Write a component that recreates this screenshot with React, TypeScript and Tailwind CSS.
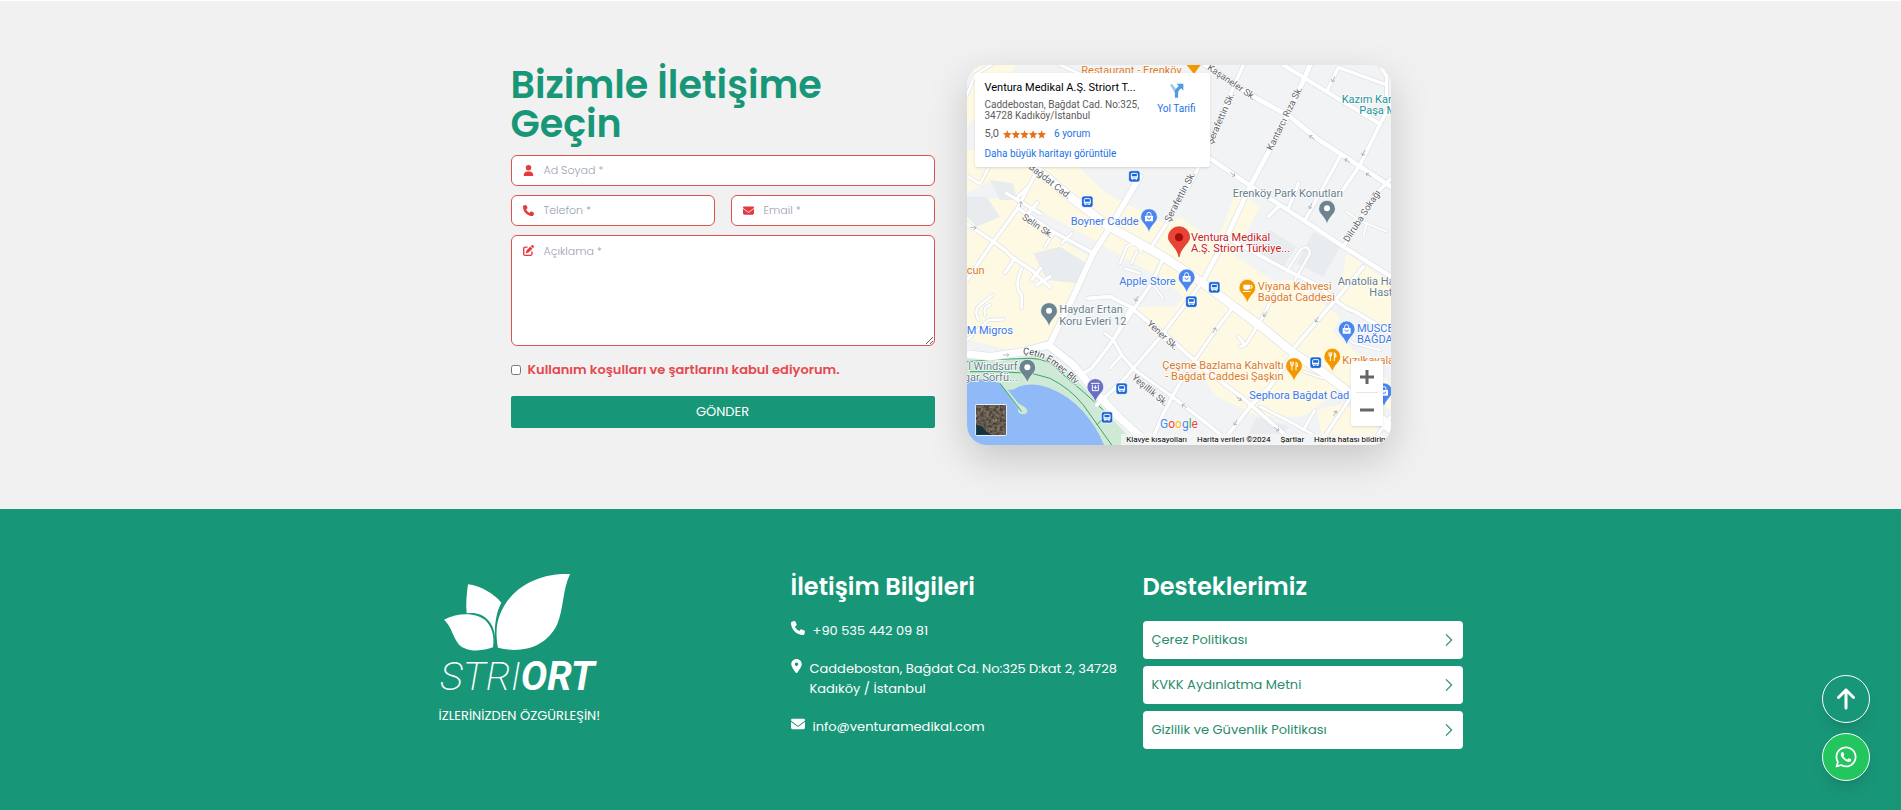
import type { ReactNode } from 'react';
import { BsChevronRight } from 'react-icons/bs';
import {
  FaArrowUp,
  FaEnvelope,
  FaLocationDot,
  FaPenToSquare,
  FaPhone,
  FaUser,
  FaWhatsapp,
} from 'react-icons/fa6';

const BODY_FONT = "font-['Poppins','Inter','Open_Sans',sans-serif]";
const MAP_FONT = "font-['Roboto','Noto_Sans',sans-serif]";

const POLICIES = ['Çerez Politikası', 'KVKK Aydınlatma Metni', 'Gizlilik ve Güvenlik Politikası'];

// [path, stroke width]
const ROADS: [string, number][] = [
  ['M51 135 L75 75 L130 40', 8],
  ['M51 378 L90 402 L120 345', 8],
  ['M51 522 L130 575 L200 480 L270 345', 10],
  ['M51 690 L130 575 L165 600', 10],
  ['M165 600 L190 625 L245 660 L300 712 M165 668 L195 625 M245 690 L272 655 M260 705 L300 680', 10],
  ['M215 655 Q190 710 215 735 L215 775', 8],
  ['M170 430 L270 490 M205 440 L235 410 M235 490 L262 458', 10],
  ['M205 475 L310 545 L430 610', 10],
  ['M285 590 L310 550 M335 580 L365 550', 8],
  ['M51 870 L115 810 L160 808', 8],
  ['M85 810 Q70 780 90 765 L128 735 M105 795 Q98 770 120 765', 7],
  ['M330 45 L420 85', 9],
  ['M880 45 L780 270 L735 375 L650 520 L605 590', 10],
  ['M640 625 L605 700 L550 780 L475 890 L425 955 L390 975', 10],
  ['M605 700 L640 745', 6],
  ['M1080 45 L1020 185 L905 400 L830 560 L755 700', 14],
  ['M750 705 L640 850 L520 990 L440 1065', 10],
  ['M850 770 L790 850 L700 980 L640 1090 L600 1185', 10],
  ['M760 40 L920 145 L1020 200 L1100 265 L1200 330 L1323 410', 14],
  ['M1000 45 L1130 125 L1290 222', 12],
  ['M1130 125 L1165 52 L1310 105 M1290 45 L1310 80 L1310 140 L1323 165', 10],
  ['M1323 160 L1290 222 L1230 345 L1175 425', 11],
  ['M780 325 L905 410 L990 465 L1090 530 L1180 590 L1323 680', 13],
  ['M1170 320 L1065 510 M1045 400 L1015 475 M955 500 L990 465', 10],
  ['M1323 385 L1270 440 L1180 590', 10],
  ['M1190 485 L1225 510 L1310 545 M1250 520 L1240 560', 6],
  ['M825 560 L1010 660 L1100 705 L1155 750 L1190 775 L1215 785 L1323 850', 11],
  ['M1010 665 L1050 600 Q1075 580 1080 610 L1035 690', 7],
  ['M1240 650 L1165 740 L1035 890', 11],
  ['M970 730 L945 790 L890 880 M865 860 L885 885 L870 890', 9],
  ['M415 745 L480 740 L540 770 L600 820 L660 865 L760 955 L880 1045 L1040 1185', 11],
  ['M545 770 L490 870 L515 915 L555 960 L680 1050 L770 1120 L850 1185', 10],
  ['M490 870 L465 850 M515 915 L480 955', 8],
  ['M1030 910 L960 1010 L900 1070 L830 1160', 11],
  ['M1125 970 L1220 1050 L1323 1150 M1200 1045 L1130 1150 L1100 1185', 10],
  ['M930 1070 L1010 1110 L1100 1160 M1060 1140 L1095 1080 M1323 1100 L1270 1170', 8],
  ['M1060 965 L1120 985 M1190 860 L1210 880 L1290 900', 6],
  ['M510 640 L530 590 Q560 570 575 605 M525 655 L570 670 M545 640 L560 605', 7],
  ['M570 380 L475 540 L430 610 L370 740 L295 890', 17],
  ['M200 310 L245 345 L360 440 L470 525 L640 620 L760 700 L850 768 L940 835 L1030 908 L1120 968 L1200 1030 L1323 1130', 25],
  ['M51 912 L120 920 L220 905 L295 885 L370 945 L440 1030 L510 1105 L600 1185', 22],
];

const COMMERCIAL = [
  'M51 300 H330 L470 430 L640 520 L690 500 L860 620 L980 700 L1130 830 L1323 1000 V1080 L1160 1010 L1010 960 L860 1010 L720 910 L640 820 L700 740 L640 690 L430 570 L250 470 L130 390 L51 430 Z',
  'M51 450 L190 440 L330 570 L420 620 L360 740 L300 870 L180 900 L51 870 Z',
  'M860 420 L930 470 L850 620 L790 600 Z',
  'M780 700 L1030 690 L1170 800 L1120 900 L1060 900 L900 800 Z',
  'M1190 610 L1323 700 V850 L1160 760 Z',
  'M560 770 L720 770 L820 830 L740 940 L600 840 Z',
  'M730 940 L1040 930 L1170 1020 L1060 1100 L930 1100 L800 1040 Z',
  'M1100 1080 L1180 1060 L1290 1140 L1240 1185 H1120 Z',
  'M75 45 H200 L120 160 L51 230 V130 Z',
];

const BLOCKS = [
  'M51 440 L110 440 L150 500 L80 530 L51 500 Z',
  'M120 390 L190 400 L200 450 L150 450 Z',
  'M250 610 L330 590 L410 640 L380 700 L290 690 Z',
  'M1090 545 L1170 590 L1120 680 L1040 640 Z',
  'M880 590 L960 540 L1040 590 L1000 650 Z',
  'M920 1100 L1020 1130 L960 1185 H880 Z',
];

const ARROWS: [number, number, number][] = [
  [70, 533, 10], [212, 463, 280], [168, 915, 0], [848, 373, 35], [1086, 262, 215], [1192, 332, 215],
  [1256, 375, 215], [1150, 88, 115], [1241, 309, 115], [1082, 468, 115], [945, 792, 120], [1101, 809, 120],
  [793, 841, -60], [560, 746, 120], [703, 1068, 215], [867, 1046, 35], [980, 1137, 35], [857, 1118, 120],
  [1155, 1090, -60],
];

const BUS_STOPS = [[553, 379], [412, 455], [793, 712], [724, 755], [515, 1016], [471, 1102], [1097, 938]];

interface LabelProps {
  x: number;
  y: number;
  color: string;
  lines: string[];
  anchor?: 'start' | 'middle' | 'end';
}

const PLACES: LabelProps[] = [
  { x: 394, y: 71, color: '#dc7a1e', lines: ['Restaurant - Erenköy'] },
  { x: 1175, y: 158, color: '#1a929c', lines: ['Kazım Kar'] },
  { x: 1228, y: 192, color: '#1a929c', lines: ['Paşa M'] },
  { x: 848, y: 442, color: '#67808c', lines: ['Erenköy Park Konutları'] },
  { x: 566, y: 526, color: '#3b78e7', lines: ['Boyner Cadde'], anchor: 'end' },
  { x: 723, y: 573, color: '#c5221f', lines: ['Ventura Medikal', 'A.Ş. Striort Türkiye...'] },
  { x: 677, y: 706, color: '#3b78e7', lines: ['Apple Store'], anchor: 'end' },
  { x: 923, y: 720, color: '#dc7a1e', lines: ['Viyana Kahvesi', 'Bağdat Caddesi'] },
  { x: 1163, y: 704, color: '#67808c', lines: ['Anatolia Ha'] },
  { x: 1258, y: 738, color: '#67808c', lines: ['Hast'] },
  { x: 50, y: 673, color: '#dc7a1e', lines: ['cun'] },
  { x: 50, y: 851, color: '#3b78e7', lines: ['M Migros'] },
  { x: 328, y: 790, color: '#67808c', lines: ['Haydar Ertan', 'Koru Evleri 12'] },
  { x: 203, y: 960, color: '#67808c', lines: ['l Windsurf', 'gar Sörfü...'], anchor: 'end' },
  { x: 1221, y: 845, color: '#3b78e7', lines: ['MUSCE', 'BAĞDA'] },
  { x: 1001, y: 956, color: '#dc7a1e', lines: ['Çeşme Bazlama Kahvaltı', '- Bağdat Caddesi Şaşkın'], anchor: 'end' },
  { x: 1177, y: 942, color: '#dc7a1e', lines: ['Kızılkayala'] },
  { x: 898, y: 1047, color: '#3b78e7', lines: ['Sephora Bağdat Cad'] },
];

// [text, centre x, centre y, angle]
const STREETS: [string, number, number, number][] = [
  ['Bağdat Cad.', 300, 394, 38],
  ['Selin Sk.', 263, 528, 34],
  ['Kaşaneler Sk.', 845, 97, 34],
  ['Kantarcı Rıza Sk.', 1004, 205, -64],
  ['Şerafettin Sk.', 812, 205, -66],
  ['Şerafettin Sk.', 690, 440, -62],
  ['Dilruba Sokağı', 1236, 498, -57],
  ['Yener Sk.', 638, 856, 43],
  ['Yeşillik Sk.', 600, 1021, 40],
];

const Pin = ({ x, y, color, children }: { x: number; y: number; color: string; children?: ReactNode }) => (
  <g transform={`translate(${x} ${y})`}>
    <path
      d="M0 46 C-3 34 -8 28 -16 18 C-22 11 -25 6 -25 -1 A25 25 0 0 1 25 -1 C25 6 22 11 16 18 C8 28 3 34 0 46 Z"
      fill={color}
      stroke="#fff"
      strokeWidth="2"
    />
    {children ?? <circle cy="-2" r="9" fill="#fff" />}
  </g>
);

const BagGlyph = () => (
  <g>
    <rect x="-12" y="-5" width="24" height="17" rx="2" fill="#fff" />
    <path d="M-6 -5 V-9 A6 6 0 0 1 6 -9 V-5" fill="none" stroke="#fff" strokeWidth="3" />
    <path d="M-5 0 A5 5 0 0 0 5 0" fill="none" stroke="#4a86ee" strokeWidth="3" />
  </g>
);

const ForkGlyph = () => (
  <path
    d="M-10 -14 V-6 Q-10 -2 -6 -2 Q-2 -2 -2 -6 V-14 M-6 -14 V12 M6 12 V-13 Q11 -11 11 0 H6"
    fill="none"
    stroke="#fff"
    strokeWidth="3"
  />
);

const MapCanvas = () => (
  <svg
    viewBox="51 45 1272 1140"
    preserveAspectRatio="xMidYMid slice"
    className={`block h-full w-full ${MAP_FONT}`}
    role="img"
    aria-label="Harita"
  >
    <defs>
      <filter id="terrain" x="0" y="0" width="1" height="1" colorInterpolationFilters="sRGB">
        <feTurbulence type="fractalNoise" baseFrequency="0.12" numOctaves="3" seed="4" />
        <feColorMatrix values="0.5 0 0 0 0.14  0.46 0 0 0 0.12  0.4 0 0 0 0.1  0 0 0 0 1" />
      </filter>
      <path id="coast" d="M218 912 Q275 915 325 958 T392 1020" />
    </defs>
    <rect x="51" y="45" width="1272" height="1140" fill="#f1f3f4" />
    {COMMERCIAL.map(d => <path key={d} d={d} fill="#fef9e3" />)}
    {BLOCKS.map(d => <path key={d} d={d} fill="#e9ecef" />)}
    <path
      d="M51 925 L140 935 L240 918 L300 922 L350 960 L420 1030 L490 1110 L560 1185 H51 Z"
      fill="#ceead6"
    />
    <path
      d="M51 985 L120 990 L150 1000 L205 1075 Q200 1095 225 1092 Q240 1085 225 1072 L205 1060 L172 1018 Q185 1025 205 1010 Q250 995 300 1015 Q360 1040 400 1085 Q440 1130 462 1185 H51 Z"
      fill="#90b9f7"
    />
    <g fill="none" stroke="#3ca56a" strokeWidth="3">
      <path d="M51 935 L150 928 L240 925 Q300 925 335 970 Q370 1000 405 1030 L460 1080" />
      <path d="M60 965 H140 L245 970 L300 985 Q360 1015 400 1065 L485 1185 M440 1125 L460 1105 M150 1000 L215 1085" />
    </g>
    <g fill="none" strokeLinecap="round" strokeLinejoin="round">
      {ROADS.map(([d, w]) => <path key={d} d={d} stroke="#dde1e6" strokeWidth={w + 4} />)}
      {ROADS.map(([d, w]) => <path key={d} d={d} stroke="#fff" strokeWidth={w} />)}
      {ARROWS.map(([x, y, angle]) => (
        <path
          key={`${x}-${y}`}
          transform={`translate(${x} ${y}) rotate(${angle})`}
          d="M-8 0 H8 M3 -5 L8 0 L3 5"
          stroke="#9aa0a6"
          strokeWidth="2"
        />
      ))}
    </g>
    {BUS_STOPS.map(([x, y]) => (
      <g key={x} transform={`translate(${x} ${y})`}>
        <rect x="-17" y="-17" width="34" height="34" rx="7" fill="#1a66d6" stroke="#fff" strokeWidth="2" />
        <rect x="-9" y="-9" width="18" height="16" rx="2" fill="none" stroke="#fff" strokeWidth="3" />
        <path d="M-9 2 H9 M-6 6 V10 M6 6 V10" stroke="#fff" strokeWidth="4" />
      </g>
    ))}
    <g fontSize="28" textAnchor="middle" fill="#5f6368" stroke="#fff" strokeWidth="4" paintOrder="stroke">
      {STREETS.map(([name, x, y, angle]) => (
        <text key={`${name}-${x}`} transform={`translate(${x} ${y}) rotate(${angle})`} y="9">
          {name}
        </text>
      ))}
    </g>
    <text fontSize="28" fill="#4a4e52" stroke="#fff" strokeWidth="4" paintOrder="stroke">
      <textPath href="#coast">Çetin Emeç Blv.</textPath>
    </text>

    <path d="M710 45 H752 L732 72 Z" fill="#f29900" />
    <Pin x={597} y={502} color="#4a86ee"><BagGlyph /></Pin>
    <Pin x={710} y={683} color="#4a86ee"><BagGlyph /></Pin>
    <Pin x={1190} y={839} color="#4a86ee"><BagGlyph /></Pin>
    <Pin x={1302} y={1025} color="#4a86ee"><BagGlyph /></Pin>
    <Pin x={1131} y={477} color="#6b8490" />
    <Pin x={297} y={784} color="#6b8490" />
    <Pin x={232} y={954} color="#6b8490" />
    <Pin x={436} y={1012} color="#6a6fc4">
      <path d="M-13 -12 H13 M-9 -8 V10 H9 V-8 M0 -6 V6 M-5 0 H5" fill="none" stroke="#fff" strokeWidth="3" />
    </Pin>
    <Pin x={892} y={714} color="#f29900">
      <path d="M-12 -10 H8 V-1 Q8 5 2 5 H-6 Q-12 5 -12 -1 Z M-13 9 H10 V12 H-13 Z" fill="#fff" />
      <path d="M8 -7 H14 V0 H8" fill="none" stroke="#fff" strokeWidth="3" />
    </Pin>
    <Pin x={1032} y={949} color="#f29900"><ForkGlyph /></Pin>
    <Pin x={1147} y={921} color="#f29900"><ForkGlyph /></Pin>
    <path
      d="M687 621 C683 602 674 594 665 582 C658 573 655 569 655 562 A32 32 0 0 1 719 562 C719 569 716 573 709 582 C700 594 691 602 687 621 Z"
      fill="#ea4335"
      stroke="#d33426"
      strokeWidth="2"
    />
    <circle cx="687" cy="562" r="12" fill="#a50e0e" />

    <g fontSize="33" stroke="#fff" strokeWidth="4" paintOrder="stroke">
      {PLACES.map(({ x, y, color, lines, anchor }) => (
        <text key={`${x}-${y}`} textAnchor={anchor ?? 'start'} fill={color}>
          {lines.map((line, i) => (
            <tspan key={line} x={x} y={y + i * 34}>{line}</tspan>
          ))}
        </text>
      ))}
    </g>
    <text x="630" y="1133" fontSize="36" stroke="#fff" strokeWidth="3" paintOrder="stroke">
      <tspan fill="#4285f4">G</tspan>
      <tspan fill="#ea4335">o</tspan>
      <tspan fill="#fbbc04">o</tspan>
      <tspan fill="#4285f4">g</tspan>
      <tspan fill="#34a853">l</tspan>
      <tspan fill="#ea4335">e</tspan>
    </text>
    <g>
      <rect x="76" y="1063" width="94" height="94" rx="4" fill="#fff" />
      <rect x="79" y="1066" width="88" height="88" filter="url(#terrain)" />
      <path d="M79 1125 Q95 1125 105 1140 T140 1154 H79 Z" fill="#0f3540" />
    </g>
  </svg>
);

const MapCard = () => (
  <div
    className={`relative h-[380px] overflow-hidden rounded-[20px] shadow-[0_14px_40px_rgba(0,0,0,0.18)] ${MAP_FONT}`}
  >
    <MapCanvas />
    <div className="absolute top-2 left-2 flex h-[94px] w-[235px] justify-between rounded-xs bg-white pt-2 pr-[14px] pl-[10px] shadow">
      <div>
        <h2 className="text-[11px] leading-[14px] whitespace-nowrap text-black">
          Ventura Medikal A.Ş. Striort T...
        </h2>
        <p className="mt-1 text-[10px] leading-[11px] whitespace-nowrap text-[#5b5b5b]">
          Caddebostan, Bağdat Cad. No:325,
          <br />
          34728 Kadıköy/İstanbul
        </p>
        <div className="mt-[6px] flex items-center text-[10px] leading-[14px]">
          <span className="mr-1 text-[11px] text-[#5b5b5b]">5,0</span>
          <svg viewBox="0 0 90 18" className="h-[9px] w-[43px]" aria-hidden="true">
            {[0, 18, 36, 54, 72].map(x => (
              <path
                key={x}
                transform={`translate(${x} 0)`}
                d="M9 0 L11.500 6 L18 6.600 L13 11 L14.500 17.500 L9 14 L3.500 17.500 L5 11 L0 6.600 L6.500 6 Z"
                fill="#e7711b"
              />
            ))}
          </svg>
          <a href="#reviews" className="ml-2 text-[#1a73e8]">6 yorum</a>
        </div>
        <a href="#large-map" className="mt-[6px] block text-[10px] leading-[14px] text-[#1a73e8]">
          Daha büyük haritayı görüntüle
        </a>
      </div>
      <a href="#directions" className="flex flex-col items-center gap-[5px] pt-[2px] text-[10px] leading-3 whitespace-nowrap text-[#1a73e8]">
        <svg viewBox="0 0 44 46" className="h-[15px] w-[15px]" aria-hidden="true">
          <path d="M2 6 L8 2 L24 22 V32 H18 Z" fill="#a4c6f0" />
          <path d="M17 45 V28 Q17 20 24 14 L29 9 L22 2 H43 V23 L36 16 L30 22 Q27 25 27 30 V45 Z" fill="#4f9ae0" />
        </svg>
        Yol Tarifi
      </a>
    </div>
    <div className="absolute right-2 bottom-[19px] flex w-8 flex-col rounded-xs bg-white px-[5px] shadow">
      <button type="button" aria-label="Yakınlaştır" className="flex h-8 items-center justify-center border-b border-[#e6e6e6]">
        <svg viewBox="0 0 14 14" className="size-[14px]"><path d="M5.500 0 H8.500 V5.500 H14 V8.500 H8.500 V14 H5.500 V8.500 H0 V5.500 H5.500 Z" fill="#666" /></svg>
      </button>
      <button type="button" aria-label="Uzaklaştır" className="flex h-[33px] items-center justify-center">
        <svg viewBox="0 0 14 14" className="size-[14px]"><path d="M0 5.500 H14 V8.500 H0 Z" fill="#666" /></svg>
      </button>
    </div>
    <div className="absolute right-0 bottom-0 flex h-[11px] items-center gap-[10px] bg-[#f5f5f5]/80 pr-[5px] pl-[5px] text-[8px] whitespace-nowrap text-black">
      <button type="button">Klavye kısayolları</button>
      <span>Harita verileri ©2024</span>
      <a href="#terms">Şartlar</a>
      <a href="#report">Harita hatası bildirin</a>
    </div>
  </div>
);

interface FieldProps {
  id: string;
  type: string;
  placeholder: string;
  icon: ReactNode;
}

const Field = ({ id, type, placeholder, icon }: FieldProps) => (
  <label
    htmlFor={id}
    className="flex h-[31px] items-center gap-[10px] rounded-md border border-[#d9534f] bg-white px-[11px] text-[11px] text-[#e5393f]"
  >
    {icon}
    <input
      id={id}
      type={type}
      placeholder={placeholder}
      aria-label={placeholder}
      className="min-w-0 flex-1 font-light text-gray-700 outline-none placeholder:text-gray-400"
    />
  </label>
);

const ContactForm = () => (
  <form className="flex flex-col" onSubmit={e => e.preventDefault()}>
    <h1 className="text-[38px] leading-[39px] font-semibold text-[#189678]">Bizimle İletişime Geçin</h1>
    <div className="mt-3 flex flex-col gap-[9px]">
      <Field id="name" type="text" placeholder="Ad Soyad *" icon={<FaUser />} />
      <div className="grid grid-cols-2 gap-4">
        <Field id="phone" type="tel" placeholder="Telefon *" icon={<FaPhone />} />
        <Field id="email" type="email" placeholder="Email *" icon={<FaEnvelope />} />
      </div>
      <div className="relative">
        <FaPenToSquare className="absolute top-[10px] left-3 text-[11px] text-[#e5393f]" />
        <textarea
          id="message"
          placeholder="Açıklama *"
          aria-label="Açıklama *"
          className="block h-[111px] w-full rounded-md border border-[#d9534f] bg-white pt-[7px] pr-3 pl-8 text-[11px] font-light text-gray-700 outline-none placeholder:text-gray-400"
        />
      </div>
    </div>
    <label htmlFor="terms" className="mt-[14px] flex items-center gap-[7px] text-[13px] leading-5 font-semibold text-[#e5484d]">
      <input id="terms" type="checkbox" className="size-[10px]" />
      Kullanım koşulları ve şartlarını kabul ediyorum.
    </label>
    <button type="submit" className="mt-4 h-8 rounded-xs bg-[#189678] text-[13px] text-white">
      GÖNDER
    </button>
  </form>
);

const Logo = () => (
  <svg viewBox="0 0 480 360" className="mt-px h-[120px] w-40" role="img" aria-label="Striort">
    <g fill="#fff">
      <path d="M393 0 C260 -5 165 85 173 190 C174 205 175 215 177 221 C240 238 320 225 355 150 C375 100 370 50 393 0 Z" />
      <path d="M87 31 C125 35 165 60 187 86 C172 115 166 150 168 190 C165 145 135 112 83 118 C80 90 83 60 87 31 Z" />
      <path d="M15 137 C60 115 115 115 142 142 C163 165 166 195 162 220 C130 232 85 235 60 212 C42 190 38 158 15 137 Z" />
    </g>
    <text
      x="3"
      y="349"
      fontSize="119"
      fontStyle="italic"
      fill="#fff"
      className="font-['Roboto','Open_Sans',sans-serif]"
    >
      <tspan fontWeight="200">STRI</tspan>
      <tspan fontWeight="700">ORT</tspan>
    </text>
  </svg>
);

const Footer = () => (
  <footer className="min-h-[301px] bg-[#189678] px-4 pt-16 pb-14 text-white">
    <div className="mx-auto grid max-w-5xl grid-cols-1 gap-8 md:grid-cols-3">
      <div>
        <Logo />
        <p className="mt-3 text-[13px] leading-5">İZLERİNİZDEN ÖZGÜRLEŞİN!</p>
      </div>
      <div>
        <h2 className="text-2xl leading-7 font-semibold">İletişim Bilgileri</h2>
        <ul className="mt-5 flex flex-col gap-[18px] text-[13px] leading-5">
          <li>
            <a href="tel:+905354420981" className="flex gap-2">
              <FaPhone className="shrink-0 text-sm" />
              +90 535 442 09 81
            </a>
          </li>
          <li className="flex gap-2">
            <FaLocationDot className="h-[14px] w-[11px] shrink-0" />
            <span className="whitespace-nowrap">
              Caddebostan, Bağdat Cd. No:325 D:kat 2, 34728
              <br />
              Kadıköy / İstanbul
            </span>
          </li>
          <li>
            <a href="mailto:info@venturamedikal.com" className="flex gap-2">
              <FaEnvelope className="shrink-0 text-sm" />
              info@venturamedikal.com
            </a>
          </li>
        </ul>
      </div>
      <div>
        <h2 className="text-2xl leading-7 font-semibold">Desteklerimiz</h2>
        <nav className="mt-5 flex flex-col gap-[7px]">
          {POLICIES.map(policy => (
            <a
              key={policy}
              href="#policy"
              className="flex h-[38px] items-center justify-between rounded-sm bg-white pr-[7px] pl-[9px] text-[13px] text-[#2a8c6c]"
            >
              {policy}
              <BsChevronRight className="text-sm" stroke="currentColor" strokeWidth="0.6" />
            </a>
          ))}
        </nav>
      </div>
    </div>
  </footer>
);

export default function App() {
  return (
    <div className={BODY_FONT}>
      <section className="border-t border-white bg-[#f1f1f1] px-4 py-16">
        <div className="mx-auto grid max-w-[880px] grid-cols-1 gap-8 md:grid-cols-2">
          <ContactForm />
          <MapCard />
        </div>
      </section>
      <Footer />
      <div className="fixed right-[31px] bottom-[29px] flex flex-col gap-[10px] text-white">
        <button
          type="button"
          aria-label="Yukarı çık"
          className="flex size-12 items-center justify-center rounded-full border border-white bg-[#189678] text-2xl shadow-lg"
        >
          <FaArrowUp />
        </button>
        <a
          href="https://wa.me/905354420981"
          aria-label="WhatsApp"
          className="flex size-12 items-center justify-center rounded-full border border-white bg-[#22c55e] text-2xl shadow-lg"
        >
          <FaWhatsapp />
        </a>
      </div>
    </div>
  );
}
